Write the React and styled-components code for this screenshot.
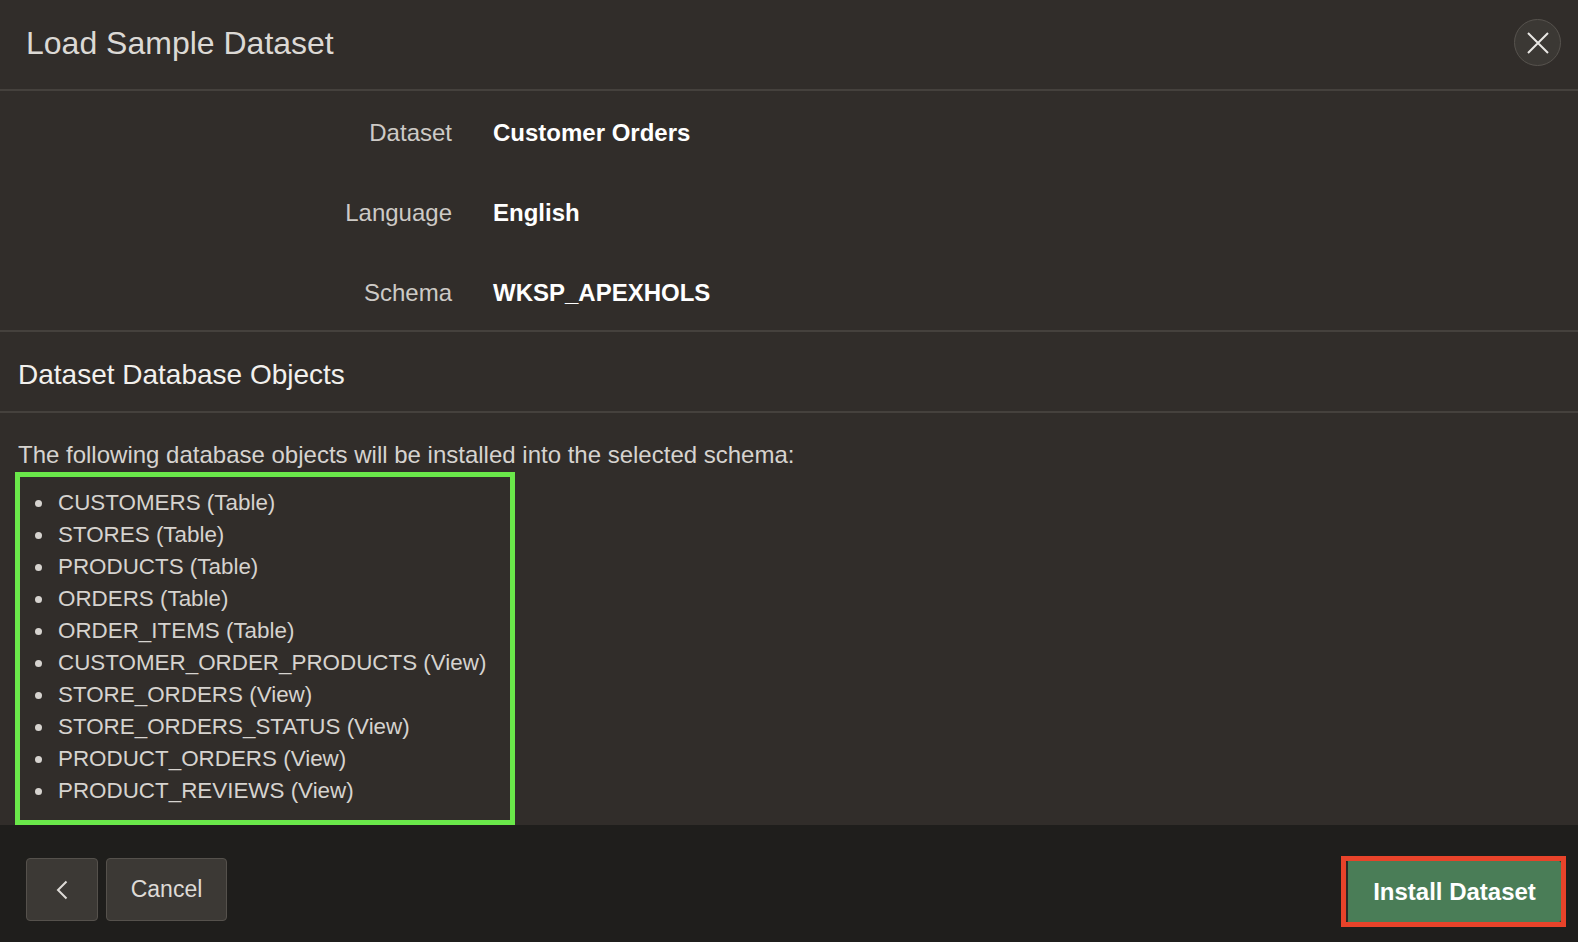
import styled, { createGlobalStyle } from 'styled-components';

const GlobalStyle = createGlobalStyle`
    html, body {
        margin: 0;
        padding: 0;
        background: #312d2a;
    }
    body {
        font-family: "Liberation Sans", Arial, sans-serif;
    }
`;

const objects = [
    'CUSTOMERS (Table)',
    'STORES (Table)',
    'PRODUCTS (Table)',
    'ORDERS (Table)',
    'ORDER_ITEMS (Table)',
    'CUSTOMER_ORDER_PRODUCTS (View)',
    'STORE_ORDERS (View)',
    'STORE_ORDERS_STATUS (View)',
    'PRODUCT_ORDERS (View)',
    'PRODUCT_REVIEWS (View)',
];

const fields = [
    { label: 'Dataset', value: 'Customer Orders' },
    { label: 'Language', value: 'English' },
    { label: 'Schema', value: 'WKSP_APEXHOLS' },
];

const App = () => {
    return (
        <>
            <GlobalStyle />
            <Dialog>
                <Header>
                    <Title>Load Sample Dataset</Title>
                    <CloseButton aria-label="Close">
                        <svg width="22" height="22" viewBox="0 0 22 22">
                            <path d="M1 1 L21 21 M21 1 L1 21" stroke="#e9e7e4" strokeWidth="2" fill="none" />
                        </svg>
                    </CloseButton>
                </Header>
                <Body>
                    <Fields>
                        {fields.map(f => (
                            <Field key={f.label}>
                                <Label>{f.label}</Label>
                                <Value>{f.value}</Value>
                            </Field>
                        ))}
                    </Fields>
                    <SectionHeading>Dataset Database Objects</SectionHeading>
                    <Content>
                        <Intro>The following database objects will be installed into the selected schema:</Intro>
                        <ObjectList>
                            {objects.map(o => (
                                <ObjectItem key={o}>{o}</ObjectItem>
                            ))}
                        </ObjectList>
                    </Content>
                </Body>
                <Footer>
                    <ButtonGroup>
                        <Button $square aria-label="Previous">
                            <svg width="12" height="20" viewBox="0 0 12 20">
                                <path d="M10.5 1.5 L2 10 L10.5 18.5" stroke="#dedbd7" strokeWidth="2" fill="none" />
                            </svg>
                        </Button>
                        <Button>Cancel</Button>
                    </ButtonGroup>
                    <Highlight>
                        <PrimaryButton>Install Dataset</PrimaryButton>
                    </Highlight>
                </Footer>
            </Dialog>
        </>
    );
};

const Dialog = styled.div`
    width: 1578px;
    height: 942px;
    display: flex;
    flex-direction: column;
    background: #312d2a;
    overflow: hidden;
`;

const Header = styled.header`
    height: 89px;
    flex-shrink: 0;
    display: flex;
    align-items: center;
    justify-content: space-between;
    padding: 0 17px 0 26px;
    border-bottom: 2px solid #45413d;
`;

const Title = styled.h1`
    margin: 0 0 2px;
    font-size: 32px;
    font-weight: 400;
    color: #dcd9d5;
`;

const CloseButton = styled.button`
    width: 47px;
    height: 47px;
    margin-bottom: 4px;
    border-radius: 50%;
    background: #3b3834;
    border: 1px solid #57534e;
    display: flex;
    align-items: center;
    justify-content: center;
    padding: 0;
    cursor: pointer;
`;

const Body = styled.main`
    flex: 1;
    display: flex;
    flex-direction: column;
`;

const Fields = styled.section`
    display: grid;
    grid-template-columns: 452px auto;
    column-gap: 41px;
    row-gap: 40px;
    grid-auto-rows: 40px;
    padding: 22px 0 17px;
    border-bottom: 2px solid #45413d;
`;

const Field = styled.div`
    display: contents;
`;

const Label = styled.div`
    font-size: 24px;
    color: #cdcac6;
    text-align: right;
    display: flex;
    align-items: center;
    justify-content: flex-end;
`;

const Value = styled.div`
    font-size: 24px;
    font-weight: 700;
    color: #ffffff;
    display: flex;
    align-items: center;
`;

const SectionHeading = styled.h2`
    margin: 0;
    height: 73px;
    padding: 6px 18px 0;
    display: flex;
    align-items: center;
    font-size: 28px;
    font-weight: 400;
    color: #f2f0ed;
    border-bottom: 2px solid #45413d;
`;

const Content = styled.section`
    padding: 26px 0 0 15px;
    display: flex;
    flex-direction: column;
    align-items: flex-start;
`;

const Intro = styled.p`
    margin: 0 0 1px 3px;
    font-size: 24px;
    line-height: 32px;
    color: #d6d3cf;
`;

const ObjectList = styled.ul`
    box-sizing: border-box;
    width: 500px;
    margin: 0;
    padding: 10px 0 13px;
    list-style: none;
    border: 5px solid #6ae84a;
`;

const ObjectItem = styled.li`
    position: relative;
    padding-left: 38px;
    font-size: 22.4px;
    line-height: 32px;
    color: #d6d3cf;

    &::before {
        content: '';
        position: absolute;
        left: 15px;
        top: 13px;
        width: 7px;
        height: 7px;
        border-radius: 50%;
        background: #d6d3cf;
    }
`;

const Footer = styled.footer`
    height: 117px;
    flex-shrink: 0;
    box-sizing: border-box;
    background: #1f1e1c;
    display: flex;
    align-items: flex-start;
    justify-content: space-between;
    padding: 31px 12px 0 26px;
`;

const ButtonGroup = styled.div`
    display: flex;
    gap: 8px;
    padding-top: 2px;
`;

const Button = styled.button`
    box-sizing: border-box;
    height: 63px;
    min-width: ${props => (props.$square ? '72px' : '121px')};
    padding: 0 ${props => (props.$square ? '0' : '22px')};
    display: flex;
    align-items: center;
    justify-content: center;
    background: #3c3935;
    border: 1px solid #55514c;
    border-radius: 4px;
    font-family: "Liberation Sans", Arial, sans-serif;
    font-size: 23px;
    color: #dedbd7;
    cursor: pointer;
`;

const Highlight = styled.div`
    border: 5px solid #e8432a;
    display: flex;
`;

const PrimaryButton = styled.button`
    box-sizing: border-box;
    width: 215px;
    height: 61px;
    background: #4a7d57;
    border: none;
    border-left: 2px solid #2a2a26;
    border-radius: 2px;
    font-family: "Liberation Sans", Arial, sans-serif;
    font-size: 24px;
    font-weight: 700;
    color: #ffffff;
    cursor: pointer;
`;

export default App;
